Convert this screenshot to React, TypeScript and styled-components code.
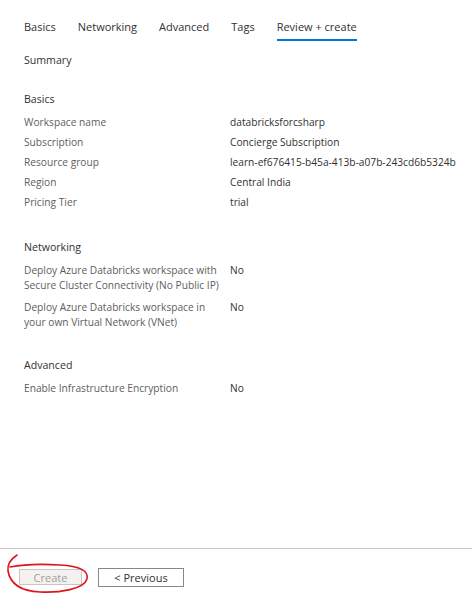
import React from "react";
import styled, { createGlobalStyle } from "styled-components";

const Global = createGlobalStyle`
  html, body { margin: 0; padding: 0; background: #fff; }
  body { font-family: "Open Sans", "Noto Sans", Arial, sans-serif; color: #323130; }
`;

const Page = styled.div`
  width: 472px;
  height: 598px;
  display: flex;
  flex-direction: column;
  background: #fff;
  overflow: hidden;
`;

const Content = styled.div`
  flex: 1;
  padding: 0 0 0 24px;
`;

const Tabs = styled.div`
  display: flex;
  gap: 22px;
  padding-top: 19px;
`;

const Tab = styled.div<{ $active?: boolean }>`
  font-size: 11px;
  line-height: 16px;
  padding-bottom: 4px;
  color: #323130;
  border-bottom: 2px solid ${(p) => (p.$active ? "#0078d4" : "transparent")};
`;

const Summary = styled.div`
  font-size: 10.6px;
  line-height: 16px;
  margin-top: 11px;
  color: #323130;
`;

const SectionTitle = styled.div<{ $mt: number }>`
  font-size: 10.6px;
  line-height: 16px;
  margin-top: ${(p) => p.$mt}px;
  margin-bottom: 8px;
  color: #323130;
`;

const Row = styled.div<{ $gap: number }>`
  display: grid;
  grid-template-columns: 206px 1fr;
  font-size: 10.2px;
  line-height: 15px;
  margin-bottom: ${(p) => p.$gap}px;
`;

const Label = styled.div`
  color: #605e5c;
  padding-right: 6px;
`;

const Value = styled.div`
  color: #323130;
  white-space: nowrap;
`;

const Footer = styled.div`
  position: relative;
  border-top: 1px solid #c8c6c4;
  height: 50px;
  display: flex;
  align-items: flex-start;
  gap: 16px;
  padding: 19px 0 0 19px;
  box-sizing: border-box;
`;

const Button = styled.button<{ $disabled?: boolean }>`
  font-family: "Open Sans", "Noto Sans", Arial, sans-serif;
  font-size: 11px;
  line-height: 1;
  background: ${(p) => (p.$disabled ? "#f3f2f1" : "#fff")};
  color: ${(p) => (p.$disabled ? "#a19f9d" : "#323130")};
  border: 1px solid ${(p) => (p.$disabled ? "#c8c6c4" : "#8a8886")};
  padding: 0;
  display: flex;
  align-items: center;
  justify-content: center;
`;

const CreateButton = styled(Button)`
  width: 63px;
  height: 16px;
  margin-top: 1px;
`;

const PrevButton = styled(Button)`
  width: 86px;
  height: 19px;
`;

const Scribble = styled.svg`
  position: absolute;
  left: 0;
  top: 0;
  pointer-events: none;
`;

const basics: [string, string][] = [
  ["Workspace name", "databricksforcsharp"],
  ["Subscription", "Concierge Subscription"],
  ["Resource group", "learn-ef676415-b45a-413b-a07b-243cd6b5324b"],
  ["Region", "Central India"],
  ["Pricing Tier", "trial"],
];

const networking: [string, string][] = [
  ["Deploy Azure Databricks workspace with Secure Cluster Connectivity (No Public IP)", "No"],
  ["Deploy Azure Databricks workspace in your own Virtual Network (VNet)", "No"],
];

export default function App() {
  return (
    <Page>
      <Global />
      <Content>
        <Tabs>
          <Tab>Basics</Tab>
          <Tab>Networking</Tab>
          <Tab>Advanced</Tab>
          <Tab>Tags</Tab>
          <Tab $active>Review + create</Tab>
        </Tabs>
        <Summary>Summary</Summary>
        <SectionTitle $mt={23}>Basics</SectionTitle>
        {basics.map(([l, v]) => (
          <Row key={l} $gap={5}>
            <Label>{l}</Label>
            <Value>{v}</Value>
          </Row>
        ))}
        <SectionTitle $mt={29}>Networking</SectionTitle>
        {networking.map(([l, v]) => (
          <Row key={l} $gap={7}>
            <Label>{l}</Label>
            <Value>{v}</Value>
          </Row>
        ))}
        <SectionTitle $mt={27}>Advanced</SectionTitle>
        <Row $gap={0}>
          <Label>Enable Infrastructure Encryption</Label>
          <Value>No</Value>
        </Row>
      </Content>
      <Footer>
        <CreateButton $disabled>Create</CreateButton>
        <PrevButton>&lt; Previous</PrevButton>
        <Scribble width="100" height="50" viewBox="0 0 100 50">
          <path
            d="M17 6 C 11 10, 7 15, 8 22 C 10 34, 20 42, 40 43 C 60 44, 84 40, 87 30 C 89 22, 80 17, 60 16 C 45 15, 25 15, 10 18"
            fill="none"
            stroke="#e0141b"
            strokeWidth="1.6"
            strokeLinecap="round"
          />
        </Scribble>
      </Footer>
    </Page>
  );
}
